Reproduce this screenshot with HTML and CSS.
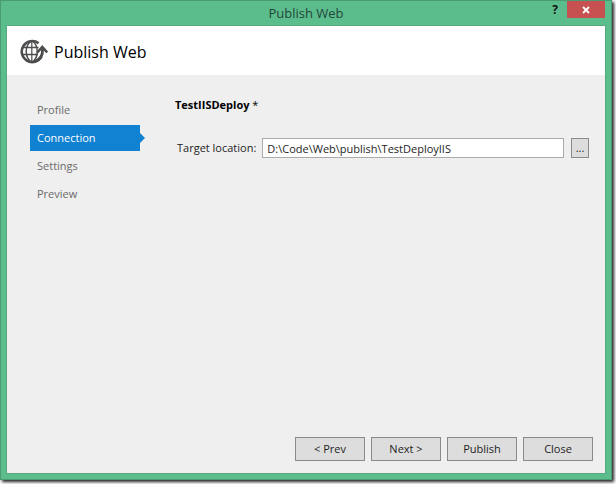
FILE: index.html
```
<!DOCTYPE html>
<html lang="en">
<head>
    <meta charset="UTF-8">
    <meta name="viewport" content="width=device-width, initial-scale=1.0">
    <title>Publish Web</title>
    <link rel="stylesheet" href="styles.css">
</head>
<body>

    <div class="window">
        <div class="titlebar">
            <span class="titlebar-text">Publish Web</span>
            <div class="titlebar-buttons">
                <button type="button" class="help" aria-label="Help">?</button>
                <button type="button" class="close" aria-label="Close window">
                    <svg width="8" height="8" viewBox="0 0 8 8"><path d="M1 1L7 7M7 1L1 7" stroke="#fff" stroke-width="1.8"/></svg>
                </button>
            </div>
        </div>

        <div class="dialog">
            <header>
                <svg class="logo" width="28" height="26" viewBox="0 0 28 26" fill="none" stroke="#4d4d4f">
                    <path d="M18.600 4.200A10.500 10.500 0 1 0 21.500 17.500" stroke-width="2.600"/>
                    <path d="M10.500 2.500C4.800 7.500 4.800 17.500 10.500 22.500M13 2.500C16 5 17.200 8.500 17.200 12.500C17.200 16.500 16 20 13 22.500M3 8.500H18.500M2 15.500H18" stroke-width="1.500"/>
                    <path d="M11.800 2V23" stroke-width="1.200"/>
                    <path d="M15 22.500C20.500 20.500 23 16.500 22.500 9.500" stroke-width="2.800"/>
                    <path d="M17.300 13.500L22.300 8L27.200 13.500" stroke-width="2.600"/>
                </svg>
                <h1>Publish Web</h1>
            </header>

            <div class="content">
                <nav>
                    <a href="#profile">Profile</a>
                    <a href="#connection" class="active">Connection</a>
                    <a href="#settings">Settings</a>
                    <a href="#preview">Preview</a>
                </nav>

                <form id="publishForm">
                    <h2>TestIISDeploy <span>*</span></h2>
                    <div class="field">
                        <label for="targetLocation">Target location:</label>
                        <input type="text" id="targetLocation" name="targetLocation" value="D:\Code\Web\publish\TestDeployIIS">
                        <button type="button" class="browse" aria-label="Browse">...</button>
                    </div>
                </form>
            </div>

            <footer>
                <button type="button">&lt; Prev</button>
                <button type="button">Next &gt;</button>
                <button type="submit" form="publishForm">Publish</button>
                <button type="button">Close</button>
            </footer>
        </div>
    </div>

</body>
</html>
```
FILE: styles.css
```
* {
    box-sizing: border-box;
}

body {
    margin: 0;
    height: 100vh;
    padding: 0 4px 4px 0;
    background-color: #fff;
    font-family: "Open Sans", "Noto Sans", sans-serif;
    font-size: 11px;
    line-height: 16px;
    color: #1e1e1e;
    overflow: hidden;
}

button,
input {
    font: inherit;
    color: inherit;
}

.window {
    display: flex;
    flex-direction: column;
    height: 100%;
    padding: 0 6px 6px;
    background-color: #5bbc8c;
    border: 1px solid #4b9a73;
    box-shadow: 2px 2px 3px #222;
}

/* title bar */
.titlebar {
    display: grid;
    grid-template-columns: 1fr auto 1fr;
    height: 25px;
}

.titlebar-text {
    grid-column: 2;
    font-size: 13px;
    line-height: 24px;
    color: #24483a;
}

.titlebar-buttons {
    display: flex;
    justify-content: flex-end;
    align-items: flex-start;
}

.titlebar button {
    height: 17px;
    padding: 0;
    border: 0;
}

.titlebar .help {
    width: 24px;
    background-color: transparent;
    font-size: 12px;
    font-weight: bold;
    color: #111;
}

.titlebar .close {
    width: 38px;
    background-color: #c75050;
}

/* dialog */
.dialog {
    flex: 1;
    display: flex;
    flex-direction: column;
    background-color: #efefef;
    outline: 1px solid #52aa7e;
}

header {
    display: flex;
    align-items: center;
    gap: 6px;
    height: 49px;
    padding: 2px 13px 0;
    background-color: #fff;
}

h1 {
    margin: 0;
    font-size: 16px;
    font-weight: normal;
    line-height: 24px;
    color: #000;
}

.content {
    flex: 1;
    display: flex;
    gap: 35px;
    padding: 22px 16px 0 23px;
}

nav {
    width: 110px;
    display: flex;
    flex-direction: column;
    gap: 2px;
}

nav a {
    position: relative;
    padding: 5px 7px;
    color: #6a6a6a;
    text-decoration: none;
}

nav .active {
    background-color: #1181d1;
    color: #fff;
}

nav .active::after {
    content: "";
    position: absolute;
    top: 8px;
    left: 100%;
    border: 5px solid transparent;
    border-left-color: #1181d1;
    border-right: 0;
}

form {
    flex: 1;
}

h2 {
    margin: 0 0 25px;
    font-size: 11px;
    line-height: 16px;
    color: #000;
}

h2 span {
    font-weight: normal;
}

.field {
    display: flex;
    align-items: center;
    padding-left: 2px;
}

.field input {
    flex: 1;
    min-width: 0;
    height: 20px;
    margin: 0 7px 0 6px;
    padding: 0 4px;
    border: 1px solid #ababab;
    background-color: #fff;
}

.browse,
footer button {
    padding: 0;
    border: 1px solid #8a8a8a;
    background-color: #dddddd;
}

.browse {
    width: 18px;
    height: 20px;
}

footer {
    display: flex;
    justify-content: flex-end;
    gap: 6px;
    padding: 12px;
}

footer button {
    width: 70px;
    height: 24px;
}
```
